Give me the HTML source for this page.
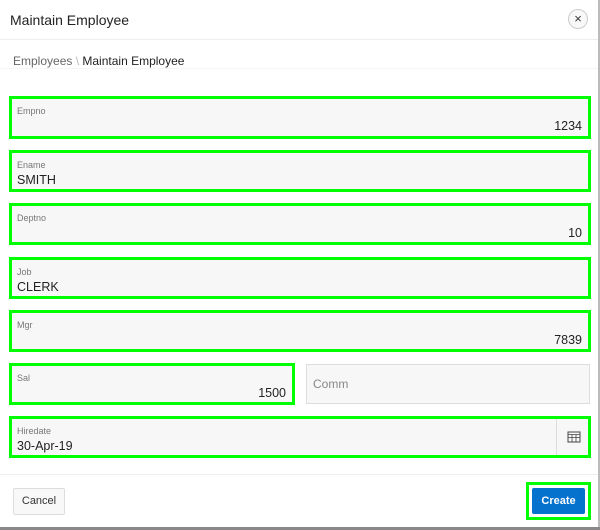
<!DOCTYPE html>
<html><head><style>
body{margin:0;width:600px;height:530px;overflow:hidden;background:#fff;font-family:"Liberation Sans",Arial,sans-serif;position:relative}
.a{position:absolute;box-sizing:border-box}
.g{border:3px solid #0f0;background:#f7f7f7}
.lb{position:absolute;left:5px;top:7px;font-size:9px;color:#777}
.v{position:absolute;font-size:12.5px;color:#222;top:20px}
.v.r{right:6px}.v.l{left:5px}
</style></head><body>
<div class="a" style="left:0;top:0;width:598px;height:40px;border-bottom:1px solid #eee"></div>
<div class="a" style="left:10px;top:12px;font-size:14px;color:#222">Maintain Employee</div>
<div class="a" style="left:568px;top:9px;width:20px;height:20px;border:1px solid #ccc;border-radius:50%;background:#f8f8f8;text-align:center;line-height:17px;font-size:13px;color:#333">×</div>
<div class="a" style="left:13px;top:54px;font-size:12px;color:#666">Employees <span style="color:#bbb">\</span> <span style="color:#222">Maintain Employee</span></div>
<div class="a" style="left:0;top:68px;width:598px;height:1px;background:#f5f5f5"></div>

<div class="a g" style="left:9px;top:96px;width:582px;height:43px"><span class="lb">Empno</span><span class="v r">1234</span></div>
<div class="a g" style="left:9px;top:150px;width:582px;height:42px"><span class="lb">Ename</span><span class="v l">SMITH</span></div>
<div class="a g" style="left:9px;top:203px;width:582px;height:42px"><span class="lb">Deptno</span><span class="v r">10</span></div>
<div class="a g" style="left:9px;top:257px;width:582px;height:42px"><span class="lb">Job</span><span class="v l">CLERK</span></div>
<div class="a g" style="left:9px;top:310px;width:582px;height:42px"><span class="lb">Mgr</span><span class="v r">7839</span></div>
<div class="a g" style="left:9px;top:363px;width:286px;height:42px"><span class="lb">Sal</span><span class="v r">1500</span></div>
<div class="a" style="left:306px;top:364px;width:284px;height:40px;border:1px solid #ddd;background:#f7f7f7"><span style="position:absolute;left:6px;top:12px;font-size:12px;color:#888">Comm</span></div>
<div class="a g" style="left:9px;top:416px;width:582px;height:42px"><span class="lb">Hiredate</span><span class="v l">30-Apr-19</span>
<div style="position:absolute;left:544px;top:0;width:1px;height:36px;background:#ddd"></div>
<svg style="position:absolute;left:555px;top:12px" width="14" height="12" viewBox="0 0 14 12"><rect x="1" y="1" width="12" height="10" fill="none" stroke="#444"/><path d="M1 3.5h12M1 6.5h12M5 3.5v7.5M9 3.5v7.5" stroke="#444" stroke-width="0.8"/></svg></div>

<div class="a" style="left:0;top:474px;width:598px;height:1px;background:#eee"></div>
<div class="a" style="left:13px;top:488px;width:52px;height:27px;border:1px solid #ddd;border-radius:2px;background:#f8f8f8;font-size:11px;color:#333;text-align:center;line-height:25px">Cancel</div>
<div class="a" style="left:526px;top:482px;width:65px;height:38px;border:3px solid #0f0;padding:3px"><div style="width:100%;height:100%;background:#0572ce;color:#fff;font-size:11px;font-weight:bold;text-align:center;line-height:26px;border-radius:2px">Create</div></div>
<div class="a" style="left:598px;top:0;width:2px;height:530px;background:#bbb"></div>
<div class="a" style="left:0;top:527px;width:600px;height:3px;background:#888"></div>
</body></html>
